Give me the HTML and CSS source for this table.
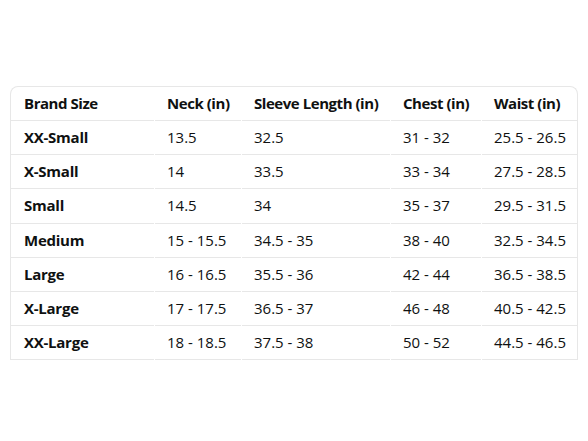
FILE: index.html
```html
<!DOCTYPE html>
<html>
<head>
<meta charset="utf-8">
<link rel="stylesheet" href="styles.css">
</head>
<body>
<div class="page">
  <div class="wrap">
    <table class="sizes">
      <colgroup>
        <col class="c1"><col class="c2"><col class="c3"><col class="c4"><col class="c5">
      </colgroup>
      <thead>
        <tr><th>Brand Size</th><th>Neck (in)</th><th>Sleeve Length (in)</th><th>Chest (in)</th><th>Waist (in)</th></tr>
      </thead>
      <tbody>
        <tr><th>XX-Small</th><td>13.5</td><td>32.5</td><td>31 - 32</td><td>25.5 - 26.5</td></tr>
        <tr><th>X-Small</th><td>14</td><td>33.5</td><td>33 - 34</td><td>27.5 - 28.5</td></tr>
        <tr><th>Small</th><td>14.5</td><td>34</td><td>35 - 37</td><td>29.5 - 31.5</td></tr>
        <tr><th>Medium</th><td>15 - 15.5</td><td>34.5 - 35</td><td>38 - 40</td><td>32.5 - 34.5</td></tr>
        <tr><th>Large</th><td>16 - 16.5</td><td>35.5 - 36</td><td>42 - 44</td><td>36.5 - 38.5</td></tr>
        <tr><th>X-Large</th><td>17 - 17.5</td><td>36.5 - 37</td><td>46 - 48</td><td>40.5 - 42.5</td></tr>
        <tr><th>XX-Large</th><td>18 - 18.5</td><td>37.5 - 38</td><td>50 - 52</td><td>44.5 - 46.5</td></tr>
      </tbody>
    </table>
  </div>
</div>
</body>
</html>
```
FILE: styles.css
```css
html, body {
  margin: 0;
  padding: 0;
  background: #ffffff;
}
.page {
  width: 588px;
  height: 441px;
  padding: 86px 10px 0 10px;
  box-sizing: border-box;
  font-family: "Open Sans", "Noto Sans", sans-serif;
  color: #0f1111;
}
.wrap {
  width: 568px;
  border: 1px solid #e7e7e7;
  border-bottom: none;
  border-radius: 8px 8px 0 0;
  box-sizing: border-box;
  overflow: hidden;
}
.sizes {
  border-collapse: separate;
  border-spacing: 1px 0;
  margin: 0 -1px;
  width: calc(100% + 2px);
  table-layout: fixed;
  font-size: 15px;
}
.c1 { width: 143px; }
.c2 { width: 86px; }
.c3 { width: 148px; }
.c4 { width: 90px; }
.c5 { width: 96px; }
.sizes th, .sizes td {
  text-align: left;
  padding: 0 0 1px 12px;
  height: 32.15px;
  border-bottom: 1px solid #e7e7e7;
  white-space: nowrap;
  line-height: 20px;
}
.sizes th:first-child {
  padding-left: 13px;
}
.sizes th {
  font-weight: 700;
  letter-spacing: -0.25px;
}
.sizes thead th {
  letter-spacing: -0.45px;
}
.sizes td {
  font-weight: 400;
}
```
